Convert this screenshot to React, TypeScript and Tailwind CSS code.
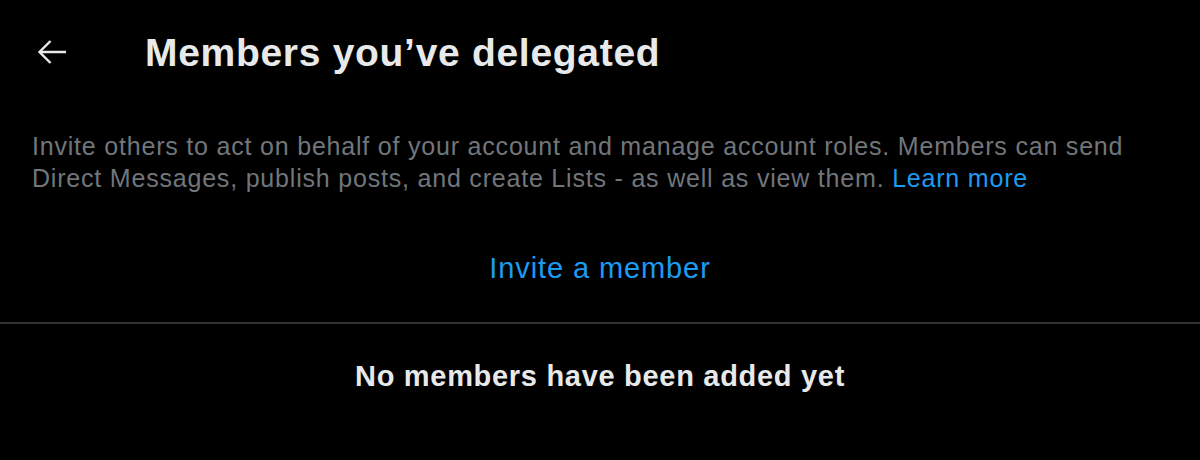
import React from "react";

const ArrowLeft = () => (
  <svg viewBox="0 0 30 30" className="w-[30px] h-[30px]" fill="none" stroke="#e7e9ea" strokeWidth={2.4}>
    <path d="M2.5 15H29M13.5 4L2.5 15l11 11" />
  </svg>
);

export default function App() {
  return (
    <div className="w-[1200px] h-[460px] bg-black text-[#e7e9ea] font-['Liberation_Sans',Arial,sans-serif] overflow-hidden">
      <div className="h-[104px] flex items-center">
        <div className="w-[145px] pl-[37px] flex items-center">
          <ArrowLeft />
        </div>
        <h1 className="text-[39px] font-bold leading-none tracking-[0.7px]">Members you’ve delegated</h1>
      </div>
      <p className="px-8 pt-[26px] text-[25px] leading-[32px] tracking-[0.8px] text-[#71767b]">
        Invite others to act on behalf of your account and manage account roles. Members can send Direct
        Messages, publish posts, and create Lists - as well as view them.{" "}
        <span className="text-[#1d9bf0]">Learn more</span>
      </p>
      <div className="h-[128px] pt-[22px] flex items-center justify-center">
        <span className="text-[29px] tracking-[0.9px] text-[#1d9bf0]">Invite a member</span>
      </div>
      <div className="h-[2px] bg-[#2f3336]" />
      <div className="h-[106px] flex items-center justify-center">
        <span className="text-[29px] font-bold tracking-[0.7px]">No members have been added yet</span>
      </div>
    </div>
  );
}
